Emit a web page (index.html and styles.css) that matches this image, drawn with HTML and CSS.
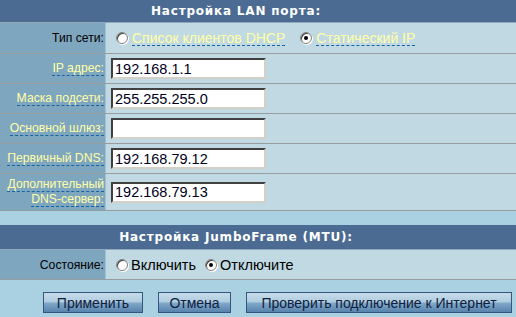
FILE: index.html
```html
<!DOCTYPE html>
<html lang="ru">
<head>
<meta charset="UTF-8">
<title>Настройка LAN порта</title>
<link rel="stylesheet" href="styles.css">
</head>
<body>
    <div class="section-head">Настройка LAN порта:</div>
    <div class="row first">
        <div class="label"><span class="plain">Тип сети:</span></div>
        <div class="value">
            <label class="choice"><input type="radio" name="wan"> <span class="hint">Список клиентов DHCP</span></label>
            <label class="choice"><input type="radio" name="wan" checked> <span class="hint">Статический IP</span></label>
        </div>
    </div>
    <div class="row">
        <div class="label"><span class="hint">IP адрес:</span></div>
        <div class="value"><input class="field" type="text" value="192.168.1.1"></div>
    </div>
    <div class="row">
        <div class="label"><span class="hint">Маска подсети:</span></div>
        <div class="value"><input class="field" type="text" value="255.255.255.0"></div>
    </div>
    <div class="row">
        <div class="label"><span class="hint">Основной шлюз:</span></div>
        <div class="value"><input class="field" type="text" value=""></div>
    </div>
    <div class="row">
        <div class="label"><span class="hint">Первичный DNS:</span></div>
        <div class="value"><input class="field" type="text" value="192.168.79.12"></div>
    </div>
    <div class="row tall">
        <div class="label two-line"><span class="hint">Дополнительный</span><span class="hint">DNS-сервер:</span></div>
        <div class="value"><input class="field" type="text" value="192.168.79.13"></div>
    </div>

    <div class="section-head second">Настройка JumboFrame (MTU):</div>
    <div class="row">
        <div class="label"><span class="plain">Состояние:</span></div>
        <div class="value big">
            <label class="choice"><input type="radio" name="jumbo"> Включить</label>
            <label class="choice"><input type="radio" name="jumbo" checked> Отключите</label>
        </div>
    </div>

    <div class="actions">
        <button class="btn apply">Применить</button>
        <button class="btn cancel">Отмена</button>
        <button class="btn check">Проверить подключение к Интернет</button>
    </div>
</body>
</html>
```

FILE: styles.css
```css
body {
    margin: 0;
    background-color: #a9d1e1;
    font-family: 'Liberation Sans', Arial, sans-serif;
    font-size: 12px;
}
.section-head {
    height: 22px;
    line-height: 22px;
    padding-right: 44px;
    background-color: #4b6b92;
    border-bottom: 1px solid #8fa8bd;
    color: #ffffff;
    font-family: 'DejaVu Sans', Verdana, sans-serif;
    font-weight: bold;
    font-size: 12px;
    letter-spacing: 0.8px;
    text-align: center;
}
.section-head.second {
    margin-top: 14px;
    height: 24px;
    line-height: 24px;
}
.row {
    display: grid;
    grid-template-columns: 106px 1fr;
    height: 29px;
    border-bottom: 1px solid #979c9f;
}
.row.first {
    height: 30px;
}
.row.tall {
    height: 36px;
}
.label {
    background-color: #7fa6bf;
    border-right: 1px solid #a2c0d0;
    display: flex;
    flex-direction: column;
    justify-content: center;
    align-items: flex-end;
    padding-right: 1px;
    font-size: 12.2px;
}
.two-line {
    line-height: 17px;
}
.plain {
    color: #000000;
}
.hint {
    color: #ffffa6;
    border-bottom: 1px dashed #1565a3;
    line-height: 14px;
}
.value {
    background-color: #c0d9e2;
    display: flex;
    align-items: center;
    padding-left: 5px;
    gap: 15px;
    font-size: 14px;
}
.choice {
    display: flex;
    align-items: center;
    gap: 4px;
}
.choice:first-child {
    margin-left: 5px;
}
.big .choice {
    gap: 3px;
    font-size: 14.5px;
}
.big {
    gap: 9px;
}
.choice input {
    appearance: none;
    margin: 0;
    width: 12px;
    height: 12px;
    border-radius: 50%;
    background-color: #ffffff;
    border: 1px solid #808080;
    box-shadow: inset 1px 1px 0 #404040, 1px 1px 0 #ffffff;
    position: relative;
}
.choice input:checked::after {
    content: '';
    position: absolute;
    left: 3px;
    top: 3px;
    width: 4px;
    height: 4px;
    border-radius: 50%;
    background-color: #000000;
}
.field {
    box-sizing: border-box;
    width: 155px;
    height: 21px;
    margin: 0;
    padding: 0 2px;
    border: 2px solid;
    border-color: #404040 #d4d0c8 #d4d0c8 #404040;
    background-color: #ffffff;
    font-family: 'Liberation Sans', Arial, sans-serif;
    font-size: 14.5px;
    color: #000022;
}
.actions {
    display: flex;
    justify-content: flex-end;
    gap: 15px;
    padding: 12px 4px 0 0;
}
.btn {
    height: 21px;
    padding: 0;
    border: 1px solid #35557c;
    background: linear-gradient(#c6dbe8, #b1cde0 45%, #7ea6c8 55%, #5883ad);
    color: #10203c;
    font-family: 'Liberation Sans', Arial, sans-serif;
    font-size: 14px;
}
.apply {
    width: 100px;
}
.cancel {
    width: 73px;
}
.check {
    width: 266px;
}
```
